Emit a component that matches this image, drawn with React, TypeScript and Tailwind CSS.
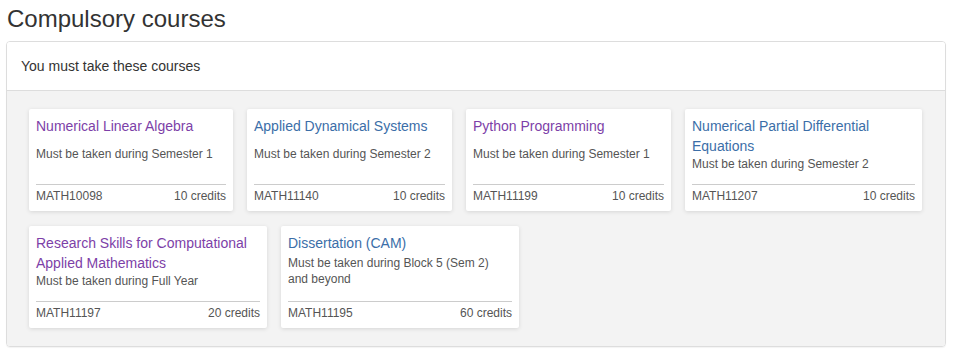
import React from 'react';

type Course = {
  title: string;
  code: string;
  credits: number;
  when: string;
  visited?: boolean;
  width: string;
};

const courses: Course[] = [
  { title: 'Numerical Linear Algebra', code: 'MATH10098', credits: 10, when: 'Must be taken during Semester 1', visited: true, width: 'w-[204px]' },
  { title: 'Applied Dynamical Systems', code: 'MATH11140', credits: 10, when: 'Must be taken during Semester 2', width: 'w-[205px]' },
  { title: 'Python Programming', code: 'MATH11199', credits: 10, when: 'Must be taken during Semester 1', visited: true, width: 'w-[205px]' },
  { title: 'Numerical Partial Differential Equations', code: 'MATH11207', credits: 10, when: 'Must be taken during Semester 2', width: 'w-[237px]' },
  { title: 'Research Skills for Computational Applied Mathematics', code: 'MATH11197', credits: 20, when: 'Must be taken during Full Year', visited: true, width: 'w-[238px]' },
  { title: 'Dissertation (CAM)', code: 'MATH11195', credits: 60, when: 'Must be taken during Block 5 (Sem 2) and beyond', width: 'w-[238px]' },
];

function CourseCard({ course }: { course: Course }) {
  return (
    <div className={`${course.width} flex flex-col bg-white rounded-[2px] px-[7px] pt-[7px] pb-[7px] shadow-[0_1px_4px_rgba(0,0,0,0.12)]`}>
      <a className={`text-[14px] leading-[20px] ${course.visited ? 'text-[#7d3fa8]' : 'text-[#3b6ea8]'}`}>
        {course.title}
      </a>
      <div className="flex-1 flex items-center">
        <p className="text-[12px] leading-[16px] text-[#555]">{course.when}</p>
      </div>
      <div className="mt-[12px] border-t border-[#ccc] pt-[3px] flex justify-between text-[12px] leading-[16px] text-[#555]">
        <span>{course.code}</span>
        <span>{course.credits} credits</span>
      </div>
    </div>
  );
}

export default function App() {
  return (
    <div className="w-[954px] h-[356px] bg-white font-['Liberation_Sans',Arial,sans-serif] text-[#333]">
      <h3 className="pl-[7px] pt-[5px] text-[24px] leading-[28px]">Compulsory courses</h3>

      <div className="mx-[6px] mt-[8px] w-[940px] border border-[#ddd] rounded-[4px] overflow-hidden shadow-[0_1px_1px_rgba(0,0,0,0.05)]">
        <div className="bg-white px-[14px] h-[49px] flex items-center border-b border-[#ddd] text-[14px]">
          You must take these courses
        </div>
        <div className="bg-[#f3f3f3] px-[22px] pt-[18px] pb-[18px] flex flex-wrap gap-x-[14px] gap-y-[15px]">
          {courses.map((c) => (
            <CourseCard key={c.code} course={c} />
          ))}
        </div>
      </div>
    </div>
  );
}
